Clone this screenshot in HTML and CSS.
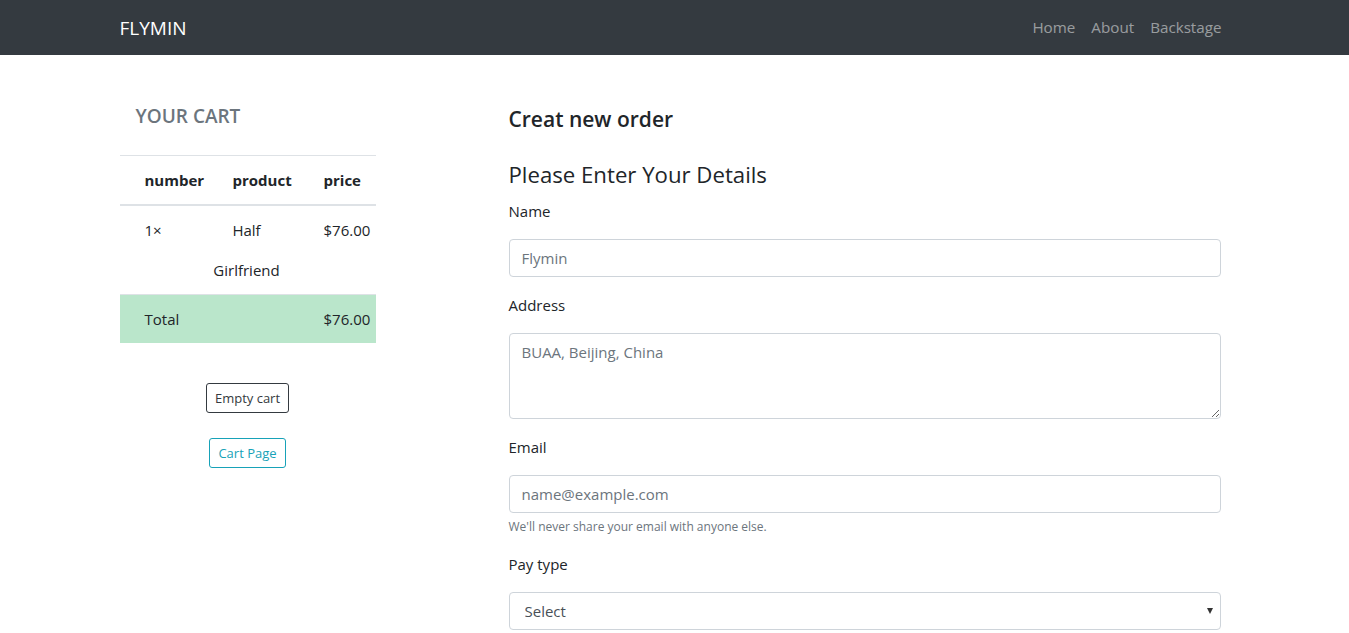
FILE: index.html
```html
<!DOCTYPE html>
<html lang="en">
<head>
<meta charset="utf-8">
<title>Flymin - Create order</title>
<link rel="stylesheet" href="styles.css">
</head>
<body>
<nav class="navbar">
  <div class="container nav-inner">
    <a class="brand" href="#">FLYMIN</a>
    <ul class="nav-links">
      <li><a href="#">Home</a></li>
      <li><a href="#">About</a></li>
      <li><a href="#">Backstage</a></li>
    </ul>
  </div>
</nav>
<main class="container main">
  <aside class="cart">
    <h4 class="cart-title">YOUR CART</h4>
    <div class="cart-table">
      <div class="row head">
        <div class="c1">number</div>
        <div class="c2">product</div>
        <div class="c3">price</div>
      </div>
      <div class="row item">
        <div class="c1">1&times;</div>
        <div class="c2 prod"><span>Half</span><span>Girlfriend</span></div>
        <div class="c3">$76.00</div>
      </div>
      <div class="row total">
        <div class="c1">Total</div>
        <div class="c2"></div>
        <div class="c3">$76.00</div>
      </div>
    </div>
    <div class="cart-actions">
      <button class="btn btn-dark-outline" type="button">Empty cart</button>
      <a class="btn btn-info-outline" href="#">Cart Page</a>
    </div>
  </aside>
  <section class="order">
    <h3 class="order-title">Creat new order</h3>
    <h4 class="details-title">Please Enter Your Details</h4>
    <form class="form">
      <div class="group">
        <label for="name">Name</label>
        <input id="name" class="control" type="text" placeholder="Flymin">
      </div>
      <div class="group">
        <label for="address">Address</label>
        <textarea id="address" class="control area" placeholder="BUAA, Beijing, China"></textarea>
      </div>
      <div class="group">
        <label for="email">Email</label>
        <input id="email" class="control" type="email" placeholder="name@example.com">
        <small class="help">We'll never share your email with anyone else.</small>
      </div>
      <div class="group">
        <label for="pay">Pay type</label>
        <div class="select-wrap">
          <select id="pay" class="control select">
            <option>Select</option>
            <option>Check</option>
            <option>Credit card</option>
            <option>Purchase order</option>
          </select>
        </div>
      </div>
    </form>
  </section>
</main>
</body>
</html>
```

FILE: styles.css
```css
* { box-sizing: border-box; }
html, body { margin: 0; padding: 0; }
body {
  font-family: "Open Sans", "Noto Sans", "Liberation Sans", sans-serif;
  font-size: 15px;
  line-height: 1.5;
  color: #212529;
  background: #fff;
}
.container {
  width: 1140px;
  margin: 0 auto;
  padding: 0 15px;
}
.navbar {
  background: #343a40;
  height: 55px;
}
.nav-inner {
  display: flex;
  align-items: center;
  justify-content: space-between;
  height: 55px;
}
.brand {
  color: #fff;
  text-decoration: none;
  font-size: 19px;
  line-height: 30px;
}
.nav-links {
  display: flex;
  list-style: none;
  margin: 0 0 2px;
  padding: 0;
}
.nav-links a {
  display: block;
  padding: 0 8px;
  color: rgba(255,255,255,.5);
  text-decoration: none;
  font-size: 15.2px;
  line-height: 24px;
}

.main {
  display: flex;
  align-items: flex-start;
}
.cart {
  width: 256px;
  flex: none;
  padding-top: 49px;
}
.cart-title {
  margin: 0 0 27px 16px;
  font-size: 19px;
  line-height: 24px;
  font-weight: 600;
  color: #6c757d;
}
.cart-table { border-top: 1px solid #dee2e6; }
.row {
  display: grid;
  grid-template-columns: 93px 99px 64px;
}
.row > div { padding: 12px 0; line-height: 24px; }
.c1 { padding-left: 25px !important; }
.c3 { padding-left: 12px !important; }
.head { border-bottom: 2px solid #dee2e6; }
.head > div { font-weight: 700; }
.head .c2 { padding-left: 20px; }
.prod {
  display: flex;
  flex-direction: column;
  align-items: center;
  width: 68px;
  gap: 16px;
}
.item .c1, .item .c3 { align-self: start; }
.total {
  border-top: 1px solid #dee2e6;
  background: #bae6cb;
}
.cart-actions {
  display: flex;
  flex-direction: column;
  align-items: center;
  gap: 25px;
  margin-top: 40px;
}
.btn {
  display: inline-block;
  font-family: inherit;
  font-size: 13px;
  line-height: 20px;
  padding: 4px 8px;
  border-radius: 3px;
  background: transparent;
  text-decoration: none;
  cursor: pointer;
}
.btn-dark-outline { border: 1px solid #343a40; color: #343a40; }
.btn-info-outline { border: 1px solid #17a2b8; color: #17a2b8; }

.order {
  width: 712px;
  flex: none;
  margin-left: 133px;
  padding-top: 51px;
}
.order-title {
  margin: 0 0 28px;
  font-size: 21px;
  line-height: 26px;
  font-weight: 600;
}
.details-title {
  margin: 0 0 9px;
  font-size: 22.2px;
  line-height: 30px;
  font-weight: 400;
}
.form { margin: 0; }
.group { margin-bottom: 16px; }
.group label {
  display: block;
  margin-bottom: 16px;
  line-height: 24px;
}
.control {
  display: block;
  width: 100%;
  height: 38px;
  padding: 6px 12px;
  font-family: inherit;
  font-size: 15px;
  line-height: 24px;
  color: #495057;
  background: #fff;
  border: 1px solid #ced4da;
  border-radius: 4px;
  outline: none;
}
.control::placeholder { color: #6c757d; opacity: 1; }
.area { height: 86px; resize: vertical; }
.help {
  display: block;
  margin-top: 4px;
  font-size: 12px;
  line-height: 19px;
  color: #6c757d;
}
.select-wrap { position: relative; }
.select {
  appearance: none;
  -webkit-appearance: none;
  padding-left: 15px;
}
.select-wrap::after {
  content: "";
  position: absolute;
  right: 8px;
  top: 16px;
  border-left: 3.5px solid transparent;
  border-right: 3.5px solid transparent;
  border-top: 6px solid #333;
  pointer-events: none;
}
```
